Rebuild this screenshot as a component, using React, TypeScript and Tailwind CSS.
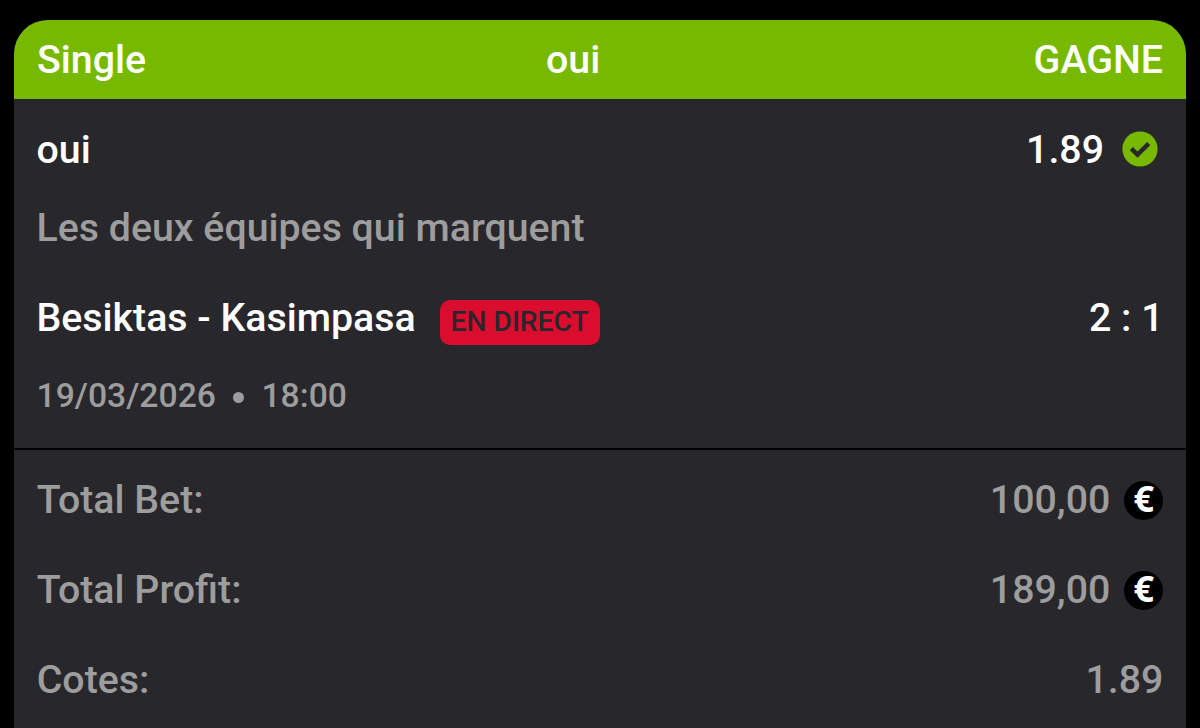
import React from "react";

function Euro() {
  return (
    <span className="mt-px flex h-[39px] w-[39px] shrink-0 items-center justify-center rounded-full bg-black pb-[3px] font-['Noto_Sans',sans-serif] text-[36px] leading-[36px] font-bold text-white">
      €
    </span>
  );
}

function TotalRow({ label, value, euro }: { label: string; value: string; euro?: boolean }) {
  return (
    <div className="flex h-[90px] items-start justify-between pt-[14px] text-[#9d9d9d]">
      <span>{label}</span>
      <span className="flex items-center gap-[14px]">
        <span>{value}</span>
        {euro && <Euro />}
      </span>
    </div>
  );
}

export default function App() {
  return (
    <div className="h-[728px] overflow-hidden bg-black px-[14px] pt-5 font-['Roboto',sans-serif] text-[39.3px] leading-[46px] font-medium text-white">
      <div className="h-[760px] overflow-hidden rounded-t-[34px] bg-[#28272c]">
        <header className="flex h-[79px] items-center bg-[#77b900] px-[23px]">
          <span className="w-[509px]">Single</span>
          <span>oui</span>
          <span className="ml-auto">GAGNE</span>
        </header>
        <section className="h-[351px] border-b-2 border-black px-[22.5px]">
          <div className="flex h-[106px] items-start justify-between pt-7">
            <span>oui</span>
            <span className="flex items-start gap-[18px] pr-[5.5px]">
              1.89
              <svg viewBox="0 0 36 36" className="mt-[3.5px] h-9 w-9">
                <circle cx="18" cy="18" r="17.6" fill="#77b900" />
                <path d="M9.3 17.7L15.5 23.6L26.7 12.7" fill="none" stroke="#28272c" strokeWidth="4.4" />
              </svg>
            </span>
          </div>
          <div className="h-[90px] text-[#9d9d9d]">Les deux équipes qui marquent</div>
          <div className="flex h-[78px] items-start justify-between">
            <span className="flex items-start gap-6">
              <span>Besiktas - Kasimpasa</span>
              <span className="mt-[5px] flex h-[45px] w-[160px] items-center justify-center rounded-[10px] bg-[#da0d2f] pb-px text-[28.2px] text-[#28272c]">EN DIRECT</span>
            </span>
            <span>2 : 1</span>
          </div>
          <div className="flex items-center text-[33.7px] text-[#9d9d9d]">
            <span>19/03/2026</span>
            <span className="mr-[17px] ml-[17.5px] mt-[3px] h-[11px] w-[11px] rounded-full bg-[#9d9d9d]" />
            <span>18:00</span>
          </div>
        </section>
        <section className="px-[22.7px] pt-[13px]">
          <TotalRow label="Total Bet:" value="100,00" euro />
          <TotalRow label="Total Profit:" value="189,00" euro />
          <TotalRow label="Cotes:" value="1.89" />
        </section>
      </div>
    </div>
  );
}
